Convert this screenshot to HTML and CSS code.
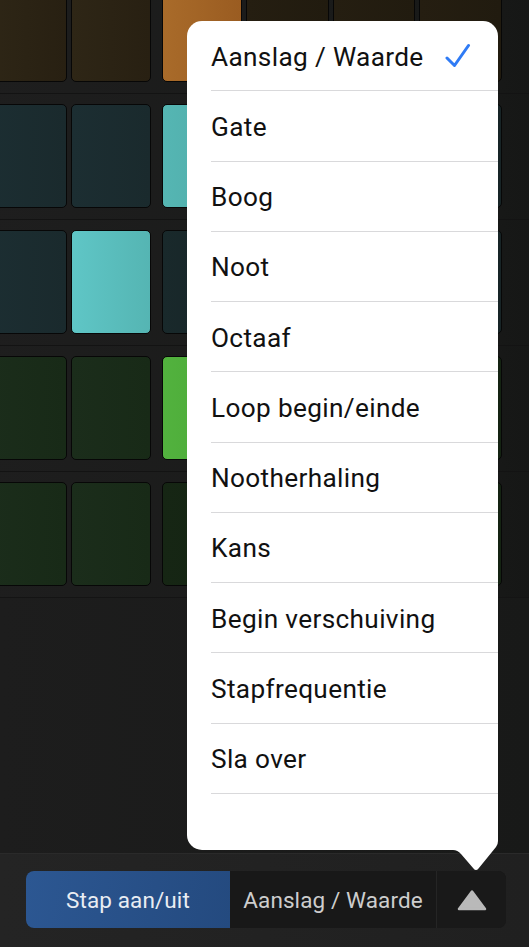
FILE: index.html
```html
<!DOCTYPE html>
<html lang="nl">
<head>
<meta charset="utf-8">
<title>Step sequencer</title>
<link rel="stylesheet" href="styles.css">
</head>
<body>
<div class="screen">
  <div class="grid-area">
    <div class="grid">
      <div class="row row-brown">
        <div class="cell"></div>
        <div class="cell"></div>
        <div class="cell beat on"></div>
        <div class="cell c3 dim"></div>
        <div class="cell c4 dim"></div>
        <div class="cell c5 dim"></div>
      </div>
      <div class="row row-teal">
        <div class="cell"></div>
        <div class="cell"></div>
        <div class="cell beat on"></div>
        <div class="cell c3 dim"></div>
        <div class="cell c4 dim"></div>
        <div class="cell c5 dim"></div>
      </div>
      <div class="row row-teal">
        <div class="cell"></div>
        <div class="cell on on-light"></div>
        <div class="cell beat dim"></div>
        <div class="cell c3 dim"></div>
        <div class="cell c4 dim"></div>
        <div class="cell c5 dim"></div>
      </div>
      <div class="row row-green">
        <div class="cell"></div>
        <div class="cell"></div>
        <div class="cell beat on"></div>
        <div class="cell c3 dim"></div>
        <div class="cell c4 dim"></div>
        <div class="cell c5 dim"></div>
      </div>
      <div class="row row-green">
        <div class="cell"></div>
        <div class="cell"></div>
        <div class="cell beat dim"></div>
        <div class="cell c3 dim"></div>
        <div class="cell c4 dim"></div>
        <div class="cell c5 dim"></div>
      </div>
    </div>
  </div>
  <div class="toolbar">
    <div class="segmented">
      <div class="seg seg-active">Stap aan/uit</div>
      <div class="seg seg-value">Aanslag / Waarde</div>
      <div class="seg seg-menu">
        <svg class="tri" width="30" height="22" viewBox="0 0 30 22"><path d="M15 2.5 L28 20 H2 Z" fill="#b9b9b9" stroke="#b9b9b9" stroke-width="2.5" stroke-linejoin="round"/></svg>
      </div>
    </div>
  </div>

  <div class="popover">
    <ul class="menu">
      <li class="item"><div class="item-inner"><span>Aanslag / Waarde</span><svg class="check" width="26" height="26" viewBox="0 0 26 26"><path d="M2 15 L9.5 22.5 L23.5 2.5" fill="none" stroke="#2f7bf5" stroke-width="3" stroke-linecap="round" stroke-linejoin="round"/></svg></div></li>
      <li class="item"><div class="item-inner"><span>Gate</span></div></li>
      <li class="item"><div class="item-inner"><span>Boog</span></div></li>
      <li class="item"><div class="item-inner"><span>Noot</span></div></li>
      <li class="item"><div class="item-inner"><span>Octaaf</span></div></li>
      <li class="item"><div class="item-inner"><span>Loop begin/einde</span></div></li>
      <li class="item"><div class="item-inner"><span>Nootherhaling</span></div></li>
      <li class="item"><div class="item-inner"><span>Kans</span></div></li>
      <li class="item"><div class="item-inner"><span>Begin verschuiving</span></div></li>
      <li class="item"><div class="item-inner"><span>Stapfrequentie</span></div></li>
      <li class="item"><div class="item-inner"><span>Sla over</span></div></li>
    </ul>
    <svg class="popover-arrow" width="52" height="44" viewBox="0 0 52 44"><path d="M0 0 H51 V12 Q51 15.5 49 18 L31.5 39.5 Q29 42.5 26.5 39.5 L14 25 Q10.5 21 6 21 H0 Z" fill="#ffffff"/></svg>
  </div>
</div>
</body>
</html>
```

FILE: styles.css
```css
* { box-sizing: border-box; }

html, body {
  margin: 0;
  padding: 0;
  background: #1c1c1c;
}

body {
  font-family: Roboto, "Liberation Sans", Arial, sans-serif;
  width: 529px;
  height: 947px;
  overflow: hidden;
}

.screen {
  position: relative;
  width: 529px;
  height: 947px;
  display: flex;
  flex-direction: column;
  overflow: hidden;
  background: linear-gradient(to right, #1d1d1d, #181918);
}

.grid-area {
  flex: 1;
  overflow: hidden;
}

.grid {
  margin-top: -33px;
  margin-left: -13px;
  border-bottom: 1px solid #141414;
}

.row {
  display: flex;
  gap: 4px;
  height: 126px;
  padding: 10px 0 11px;
  border-top: 1px solid #131313;
  background: linear-gradient(to right, #1e1e1e, #181918 90%, #161716);
}

.cell {
  flex: none;
  width: 80px;
  height: 104px;
  border: 1.5px solid #070707;
  border-radius: 5px;
}

.cell.beat { margin-left: 7px; }
.cell.c3 { width: 83px; }
.cell.c4 { width: 82px; }
.cell.c5 { width: 83px; }

.row-brown .cell { background: linear-gradient(to right, #2e2616, #282012); }
.row-brown .cell.dim { background: linear-gradient(to right, #251e11, #211b0f); }
.row-brown .cell.on { background: linear-gradient(to right, #a96b2a, #9a5c21); }

.row-teal .cell { background: linear-gradient(to right, #1c2e32, #1a2a2d); }
.row-teal .cell.dim { background: linear-gradient(to right, #19292b, #172426); }
.row-teal .cell.on { background: linear-gradient(to right, #55b6b3, #4fa9a7); }
.row-teal .cell.on-light { background: linear-gradient(to right, #5fc6c6, #55b5b3); }

.row-green .cell { background: linear-gradient(to right, #1b2d1b, #182a17); }
.row-green .cell.dim { background: linear-gradient(to right, #162614, #142312); }
.row-green .cell.on { background: linear-gradient(to right, #52b23e, #4aa737); }

.toolbar {
  flex: none;
  height: 94px;
  border-top: 1px solid #2a2a2a;
  background: linear-gradient(to right, #242424, #202020);
  padding: 17px 0 0 26px;
}

.segmented {
  display: flex;
  width: 480px;
  height: 57px;
  border-radius: 8px;
  overflow: hidden;
  background: #181818;
}

.seg {
  display: flex;
  align-items: center;
  justify-content: center;
  font-size: 22.5px;
  letter-spacing: 0.1px;
}

.seg-active {
  width: 204px;
  background: linear-gradient(100deg, #2c5792, #244a7f);
  color: #e9edf3;
}

.seg-value {
  width: 206px;
  color: #cdcdcd;
  background: #181818;
}

.seg-menu {
  width: 70px;
  border-left: 1px solid #252525;
  background: #191919;
}

.tri { display: block; margin-top: 1px; }

.popover {
  position: absolute;
  left: 187px;
  top: 21px;
  width: 311px;
  height: 829px;
  background: #ffffff;
  border-radius: 15px;
}

.menu {
  list-style: none;
  margin: 0;
  padding: 0;
}

.item {
  height: 70.27px;
  padding-left: 24px;
}

.item-inner {
  height: 100%;
  display: flex;
  align-items: center;
  justify-content: space-between;
  padding: 2px 27px 0 0;
  border-bottom: 1px solid #d9d9db;
  font-size: 26.2px;
  letter-spacing: 0.35px;
  color: #111111;
}

.check { display: block; margin-top: -1px; }

.popover-arrow {
  position: absolute;
  left: 260px;
  top: 808px;
  display: block;
}
```
